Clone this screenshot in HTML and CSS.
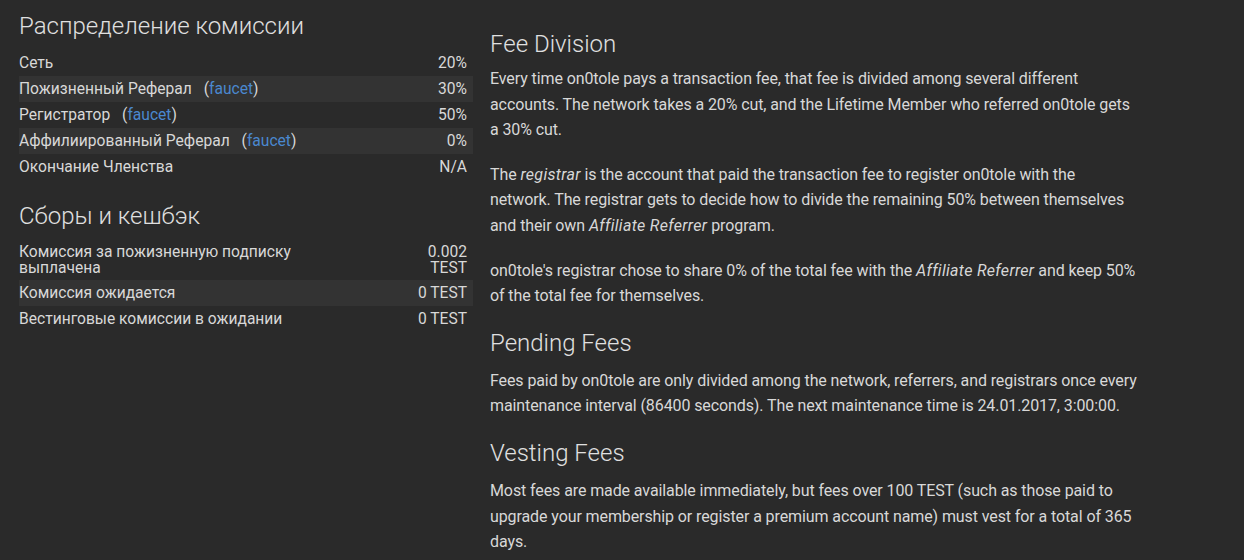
FILE: index.html
```html
<!DOCTYPE html>
<html lang="en">
<head>
    <meta charset="UTF-8">
    <meta name="viewport" content="width=device-width, initial-scale=1.0">
    <title>Fees</title>
    <link rel="stylesheet" href="styles.css">
</head>
<body>
    <div class="page">
        <div class="left">
            <h3>Распределение комиссии</h3>
            <table class="stats">
                <tbody>
                    <tr><td>Сеть</td><td class="val">20%</td></tr>
                    <tr><td>Пожизненный Реферал <span class="ref">(<a href="#">faucet</a>)</span></td><td class="val">30%</td></tr>
                    <tr><td>Регистратор <span class="ref">(<a href="#">faucet</a>)</span></td><td class="val">50%</td></tr>
                    <tr><td>Аффилиированный Реферал <span class="ref">(<a href="#">faucet</a>)</span></td><td class="val">0%</td></tr>
                    <tr><td>Окончание Членства</td><td class="val">N/A</td></tr>
                </tbody>
            </table>
            <h3 class="second">Сборы и кешбэк</h3>
            <table class="stats">
                <tbody>
                    <tr class="tall"><td><div class="label">Комиссия за пожизненную подписку выплачена</div></td><td class="val"><div class="amount">0.002 TEST</div></td></tr>
                    <tr><td>Комиссия ожидается</td><td class="val">0 TEST</td></tr>
                    <tr><td>Вестинговые комиссии в ожидании</td><td class="val">0 TEST</td></tr>
                </tbody>
            </table>
        </div>
        <div class="right">
            <h3>Fee Division</h3>
            <p>Every time on0tole pays a transaction fee, that fee is divided among several different accounts. The network takes a 20% cut, and the Lifetime Member who referred on0tole gets a 30% cut.</p>
            <p>The <em>registrar</em> is the account that paid the transaction fee to register on0tole with the network. The registrar gets to decide how to divide the remaining 50% between themselves and their own <em>Affiliate Referrer</em> program.</p>
            <p>on0tole's registrar chose to share 0% of the total fee with the <em>Affiliate Referrer</em> and keep 50% of the total fee for themselves.</p>
            <h3>Pending Fees</h3>
            <p>Fees paid by on0tole are only divided among the network, referrers, and registrars once every maintenance interval (86400 seconds). The next maintenance time is 24.01.2017, 3:00:00.</p>
            <h3>Vesting Fees</h3>
            <p>Most fees are made available immediately, but fees over 100 TEST (such as those paid to upgrade your membership or register a premium account name) must vest for a total of 365 days.</p>
        </div>
    </div>
</body>
</html>
```

FILE: styles.css
```css
*{
    margin: 0;
    padding: 0;
    box-sizing: border-box;
}
body{
    background-color: #2a2a2a;
    color: #d8d8d8;
    font-family: Roboto, "Liberation Sans", sans-serif;
    overflow: hidden;
}
.page{
    display: grid;
    grid-template-columns: 454px 647px;
    column-gap: 17px;
    padding-left: 19px;
}
h3{
    font-weight: 300;
    font-size: 24px;
    line-height: 30px;
    color: #e0e0e0;
}
.left{
    padding-top: 11px;
}
.left h3{
    margin-bottom: 9px;
}
.left h3.second{
    margin-top: 21px;
    margin-bottom: 7px;
}
.stats{
    width: 100%;
    border-collapse: collapse;
    font-size: 15.6px;
}
.stats td{
    padding: 4px 6px 4px 0;
    line-height: 18px;
    vertical-align: top;
}
.stats tr:nth-child(even){
    background-color: #333333;
}
.stats td.val{
    text-align: right;
}
.stats tr.tall td{
    line-height: 16px;
    padding-top: 6px;
    padding-bottom: 4px;
}
.label{
    max-width: 290px;
}
.amount{
    max-width: 50px;
    margin-left: auto;
}
.ref{
    margin-left: 8px;
}
.ref a{
    color: #4a88cf;
    text-decoration: none;
}
.right{
    padding-top: 29px;
}
.right h3{
    margin-bottom: 7px;
}
.right p{
    font-size: 16px;
    line-height: 25.6px;
    letter-spacing: -0.1px;
    margin-bottom: 19px;
}
.right p em{
    letter-spacing: 0.3px;
}
.right p + h3{
    margin-bottom: 10px;
}
```
